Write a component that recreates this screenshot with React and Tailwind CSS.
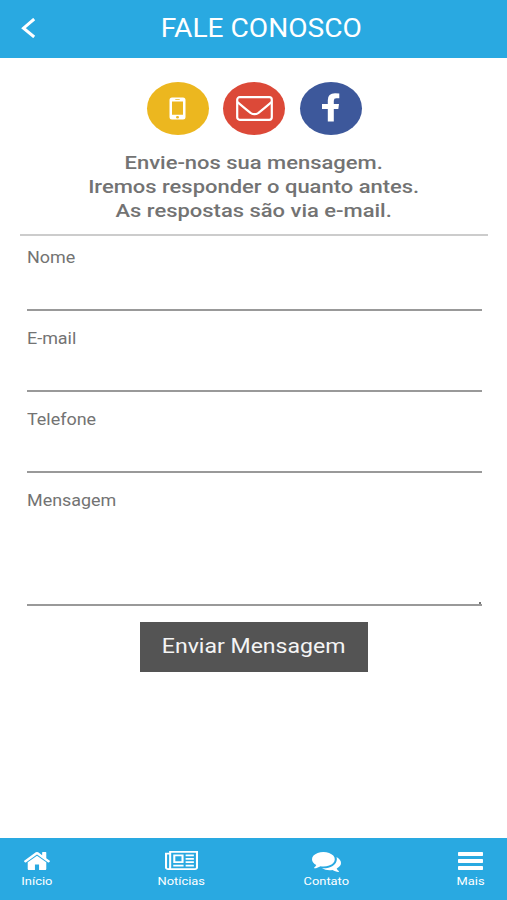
const homePath =
  'M1472 992v480q0 26-19 45t-45 19h-384v-384h-256v384h-384q-26 0-45-19t-19-45v-480q0-1 .5-3t.5-3l575-474 575 474q1 2 1 6zm223-69l-62 74q-8 9-21 11h-3q-13 0-21-7l-692-577-692 577q-12 8-24 7-13-2-21-11l-62-74q-8-10-7-23.5t11-21.5l719-599q32-26 76-26t76 26l244 204v-195q0-14 9-23t23-9h192q14 0 23 9t9 23v408l219 182q10 8 11 21.5t-7 23.5z';
const newsPath =
  'M1024 512h-384v384h384v-384zm128 640v128h-640v-128h640zm0-768v640h-640v-640h640zm640 768v128h-512v-128h512zm0-256v128h-512v-128h512zm0-256v128h-512v-128h512zm0-256v128h-512v-128h512zm-1536 960v-960h-128v960q0 26 19 45t45 19 45-19 19-45zm1664 0v-1088h-1536v1088q0 33-11 64h1483q26 0 45-19t19-45zm128-1216v1216q0 80-56 136t-136 56h-1664q-80 0-136-56t-56-136v-1088h256v-128h1792z';
const chatPath =
  'M1408 768q0 139-94 257t-256.5 186.5-353.5 68.5q-86 0-176-16-124 88-278 128-36 9-86 16h-3q-11 0-20.5-8t-11.5-21q-1-3-1-6.5t.5-6.5 2-6l2.5-5 3.5-5.5 4-5 4.5-5 4-4.5q5-6 23-25t26-29.5 22.5-29 25-38.5 20.5-44q-124-72-195-177t-71-224q0-139 94-257t256.5-186.5 353.5-68.5 353.5 68.5 256.5 186.5 94 257zm384 256q0 120-71 224.5t-195 176.5q10 24 20.5 44t25 38.5 22.5 29 26 29.5 23 25q1 1 4 4.5t4.5 5 4 5 3.5 5.5l2.5 5 2 6 .5 6.5-1 6.5q-3 14-13 22t-22 7q-50-7-86-16-154-40-278-128-90 16-176 16-271 0-472-132 58 4 88 4 161 0 309-45t264-129q125-92 192-212t67-254q0-77-23-152 129 71 204 178t75 230z';

function Field({ label, area }) {
  return (
    <label className={`block border-b-2 border-[#999] ${area ? 'h-[133px]' : 'h-[81px]'}`}>
      <span className="inline-block origin-left scale-x-[1.12] pt-[16px] text-[16px] leading-6">{label}</span>
    </label>
  );
}

function Tab({ label, children }) {
  return (
    <a className="flex w-[72px] flex-col items-center pt-3">
      <span className="flex h-[22px] items-start justify-center">{children}</span>
      <span className="origin-center scale-x-[1.12] text-[11.5px] leading-[18px]">{label}</span>
    </a>
  );
}

export default function App() {
  return (
    <div className="flex h-[900px] w-[507px] flex-col overflow-hidden bg-white font-['Roboto',sans-serif] text-[#737373]">
      <header className="flex h-[57.5px] shrink-0 items-center bg-[#29a9e1] px-[21px] pb-[2px] text-white">
        <svg className="h-[20px] w-[15px]" viewBox="0 0 15 20" fill="none" stroke="currentColor" strokeWidth="3">
          <path d="M13.2 1 2.5 10.2 13.2 19" />
        </svg>
        <h1 className="flex-1 pt-[2px] text-center">
          <span className="inline-block scale-x-[1.125] text-[25px] leading-8">FALE CONOSCO</span>
        </h1>
      </header>

      <main className="flex-1 px-5 pt-[24.5px]">
        <div className="flex justify-center gap-[14.5px] pl-[1.5px] text-white">
          <div className="flex h-[53px] w-[62px] items-center justify-center rounded-[50%] bg-[#ecb71f]">
            <svg className="h-[23px] w-[17px]" viewBox="0 0 17 23">
              <path
                fill="currentColor"
                fillRule="evenodd"
                d="M3 .5h11a2.500 2.500 0 0 1 2.500 2.500v17a2.500 2.500 0 0 1-2.500 2.500H3A2.500 2.500 0 0 1 .5 20V3A2.500 2.500 0 0 1 3 .5ZM3 4.500v13.300h11V4.500ZM6.300 2.200v.7h4.400v-.7ZM7 20.300a1.500 1.200 0 1 0 3 0 1.500 1.200 0 1 0-3 0Z"
              />
            </svg>
          </div>
          <div className="flex h-[53px] w-[62px] items-center justify-center rounded-[50%] bg-[#dc4938]">
            <svg className="h-[25px] w-[37px]" viewBox="0 0 37 25" fill="none" stroke="currentColor" strokeWidth="2.2">
              <rect x="1.2" y="1.2" width="34.6" height="22.6" rx="2.5" />
              <path d="M1.500 6.200C6 9.800 10 13.300 14.500 16.800Q18.500 19.600 22.500 16.800C27 13.300 31 9.800 35.500 6.200" />
            </svg>
          </div>
          <div className="flex h-[53px] w-[62px] items-center justify-center rounded-[50%] bg-[#3d589b]">
            <svg className="mb-[2px] h-[29px] w-[19px]" viewBox="0 0 19 29">
              <path
                fill="currentColor"
                d="M18.300 .5v4.800h-3q-2.500 0-2.500 2.400v3.300h5.200l-.7 4.900h-4.500V28.500H6.800V15.900H1V11h5.800V7.200Q6.800 .3 14 .3q2.800 0 4.300.2Z"
              />
            </svg>
          </div>
        </div>

        <p className="mt-[16px] text-center text-[18px] font-medium leading-6">
          <span className="inline-block scale-x-[1.22]">
            Envie-nos sua mensagem.
            <br />
            Iremos responder o quanto antes.
            <br />
            As respostas são via e-mail.
          </span>
        </p>

        <hr className="mt-[11px] w-[468px] border-t-2 border-[#ccc]" />

        <form className="-mt-[6px] ml-[6.500px] w-[455.500px]">
          <Field label="Nome" />
          <Field label="E-mail" />
          <Field label="Telefone" />
          <div className="relative">
            <Field label="Mensagem" area />
            <span className="absolute right-[1px] bottom-[2px] h-[2px] w-[2px] bg-[#777]" />
          </div>
          <button type="button" className="mt-[16px] ml-[113.500px] block h-[50px] w-[228px] bg-[#545454] pb-[2px] text-[#f4f4f4]">
            <span className="inline-block scale-x-[1.125] text-[20.500px] leading-7">Enviar Mensagem</span>
          </button>
        </form>
      </main>

      <nav className="flex h-[62px] shrink-0 justify-between bg-[#29a9e1] pl-px text-white">
        <Tab label="Início">
          <svg className="mt-[2px] h-[18px] w-[26px]" viewBox="89 253 1614 1283" preserveAspectRatio="none" fill="currentColor">
            <path d={homePath} />
          </svg>
        </Tab>
        <Tab label="Notícias">
          <svg className="mt-[1px] h-[19px] w-[33px]" viewBox="0 128 2048 1408" preserveAspectRatio="none" fill="currentColor">
            <path d={newsPath} />
          </svg>
        </Tab>
        <Tab label="Contato">
          <svg className="mt-[2px] h-[20px] w-[29px]" viewBox="0 256 1792 1408" preserveAspectRatio="none" fill="currentColor">
            <path d={chatPath} />
          </svg>
        </Tab>
        <Tab label="Mais">
          <svg className="mt-[2px] h-[18px] w-[25px]" viewBox="0 0 25 18" fill="currentColor">
            <rect width="25" height="4" rx=".7" />
            <rect y="7" width="25" height="4" rx=".7" />
            <rect y="14" width="25" height="4" rx=".7" />
          </svg>
        </Tab>
      </nav>
    </div>
  );
}
